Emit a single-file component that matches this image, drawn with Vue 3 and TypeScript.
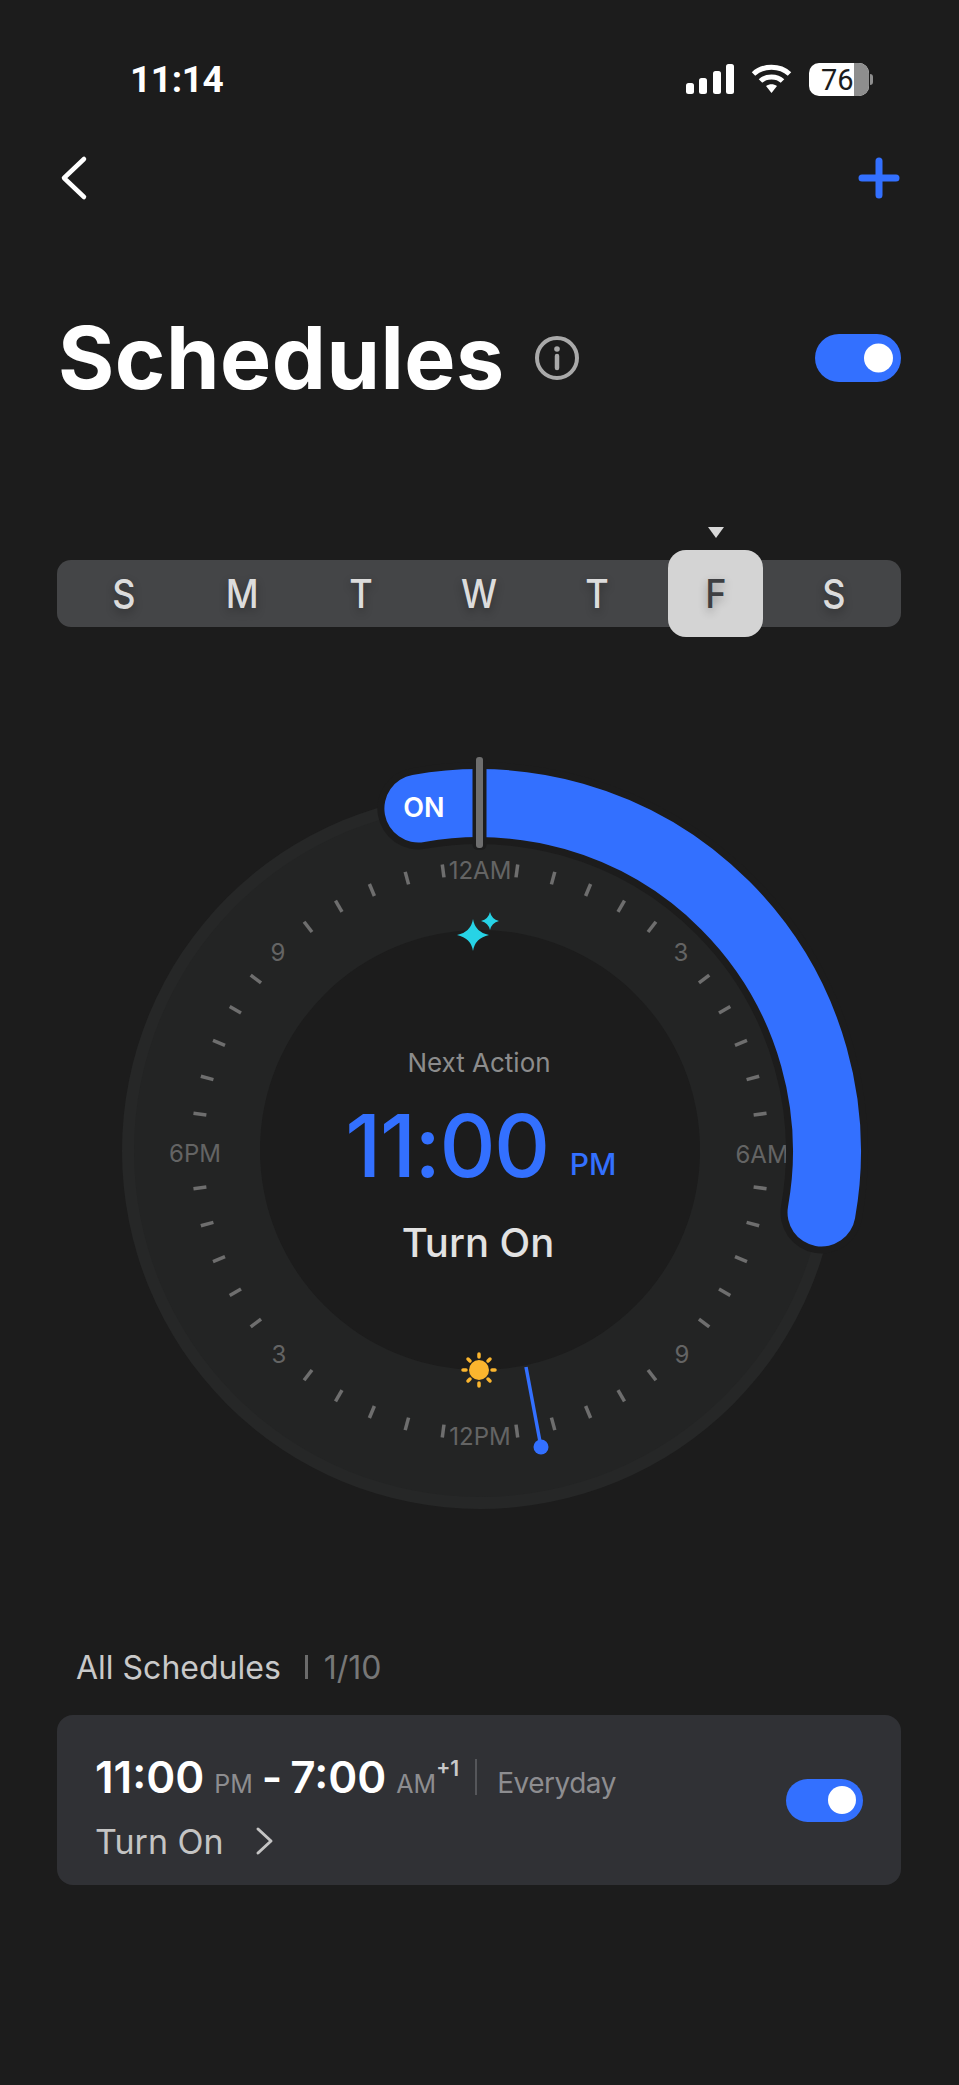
<script setup lang="ts">
import { computed } from "vue";

const days = [
    { label: "S" },
    { label: "M" },
    { label: "T" },
    { label: "W" },
    { label: "T" },
    { label: "F", active: true },
    { label: "S" },
];

const cx = 480;
const cy = 480;

// a point on the dial, degrees clockwise from 12 o'clock
function polar(deg: number, r: number) {
    const a = (deg * Math.PI) / 180;
    return { x: cx + r * Math.sin(a), y: cy - r * Math.cos(a) };
}

const ticks = computed(() => {
    const list = [];
    for (let i = 0; i < 48; i++) {
        if (i % 6 === 0) continue;
        const deg = i * 7.5;
        const a = polar(deg, 276);
        const b = polar(deg, 289);
        list.push({ x1: a.x, y1: a.y, x2: b.x, y2: b.y, key: i });
    }
    return list;
});

const hourLabels = [
    { text: "12AM", x: 480, y: 208 },
    { text: "3", x: 681, y: 290 },
    { text: "6AM", x: 762, y: 492 },
    { text: "9", x: 682, y: 692 },
    { text: "12PM", x: 480, y: 774 },
    { text: "3", x: 279, y: 692 },
    { text: "6PM", x: 195, y: 491 },
    { text: "9", x: 278, y: 290 },
];

const arcStart = polar(-10.2, 348);
const arcEnd = polar(100.2, 347);
const arcPath = `M ${arcStart.x} ${arcStart.y} A 348 348 0 0 1 ${arcEnd.x} ${arcEnd.y}`;
</script>

<template>
    <div class="screen">
        <div class="status">
            <span class="clock">11:14</span>
            <div class="status-icons">
                <svg width="48" height="30" viewBox="0 0 48 30" class="signal">
                    <rect x="0" y="19" width="8" height="11" rx="2.5" />
                    <rect x="13" y="14" width="8" height="16" rx="2.5" />
                    <rect x="27" y="7" width="8" height="23" rx="2.5" />
                    <rect x="40" y="0" width="8" height="30" rx="2.5" />
                </svg>
                <svg width="41" height="30" viewBox="0 0 41 30" class="wifi">
                    <path d="M2.500 10 C12 1 29 1 38.500 10" />
                    <path d="M9.500 17 C15 11.500 26 11.500 31.500 17" />
                    <path d="M15 22 L20.500 29 L26 22 C22.500 19.500 18.500 19.500 15 22 Z" class="wifi-dot" />
                </svg>
                <div class="battery">
                    <div class="battery-body">
                        <div class="battery-empty"></div>
                        <span class="battery-num">76</span>
                    </div>
                    <div class="battery-cap"></div>
                </div>
            </div>
        </div>

        <div class="nav">
            <svg width="30" height="46" viewBox="0 0 30 46" class="back">
                <path d="M26 4 L6 23 L26 42" />
            </svg>
            <svg width="42" height="42" viewBox="0 0 42 42" class="plus">
                <path d="M21 4 V38 M4 21 H38" />
            </svg>
        </div>

        <div class="title-row">
            <h1>Schedules</h1>
            <svg width="46" height="46" viewBox="0 0 46 46" class="info">
                <circle cx="23" cy="23" r="20" />
                <circle cx="23" cy="14" r="2.800" class="info-dot" />
                <path d="M23 21 V33" />
            </svg>
            <div class="toggle big"><i></i></div>
        </div>

        <div class="week-wrap">
            <div class="week">
                <div v-for="(day, index) of days" :key="index" class="day" :class="{ active: day.active }">
                    <span v-if="day.active" class="pointer"></span>
                    <span class="day-label">{{ day.label }}</span>
                </div>
            </div>
        </div>

        <div class="dial">
            <svg width="959" height="960" viewBox="0 0 959 960">
                <circle :cx="cx" :cy="cy" r="358" fill="#262727" />
                <circle :cx="cx" :cy="cy" r="346" fill="#232424" />
                <circle :cx="cx" :cy="cy - 1" r="220" fill="#1c1c1c" />
                <line
                    v-for="t of ticks"
                    :key="t.key"
                    :x1="t.x1"
                    :y1="t.y1"
                    :x2="t.x2"
                    :y2="t.y2"
                    stroke="#6e6e6e"
                    stroke-width="3.500"
                />
                <text
                    v-for="l of hourLabels"
                    :key="l.text + l.x"
                    :x="l.x"
                    :y="l.y"
                    text-anchor="middle"
                    class="hour"
                >{{ l.text }}</text>

                <path :d="arcPath" fill="none" stroke="#1c1c1c" stroke-width="82" stroke-linecap="round" />
                <path :d="arcPath" fill="none" stroke="#3370ff" stroke-width="68" stroke-linecap="round" />
                <text x="424" y="146" text-anchor="middle" class="on">ON</text>
                <rect x="472.500" y="84" width="14" height="95" rx="5" fill="#1c1c1c" />
                <rect x="476" y="86" width="7" height="91" rx="3" fill="#6e6e6e" />

                <path d="M473 248 Q475 261 489 264 Q475 267 473 280 Q471 267 457 264 Q471 261 473 248 Z" fill="#27d3e6" />
                <path d="M490 241 Q491.500 248 499 250 Q491.500 252 490 259 Q488.500 252 481 250 Q488.500 248 490 241 Z" fill="#27d3e6" />

                <circle cx="479" cy="699" r="10" fill="#fbb52e" />
                <g stroke="#fbb52e" stroke-width="3.500" stroke-linecap="round">
                    <path d="M479 683 V686 M479 712 V715 M463 699 H466 M492 699 H495 M468 688 L470 690 M488 708 L490 710 M468 710 L470 708 M488 690 L490 688" />
                </g>

                <line x1="526" y1="696" x2="541" y2="776" stroke="#3370ff" stroke-width="3.500" />
                <circle cx="541" cy="776" r="7.500" fill="#3370ff" />

                <text x="479" y="401" text-anchor="middle" class="next">Next Action</text>
                <text x="447" y="506" text-anchor="middle" class="big-time">11:00</text>
                <text x="593" y="504" text-anchor="middle" class="pm">PM</text>
                <text x="478" y="586" text-anchor="middle" class="action">Turn On</text>
            </svg>
        </div>

        <div class="list-head">
            <span class="list-title">All Schedules</span>
            <span class="list-sep"></span>
            <span class="list-count">1/10</span>
        </div>

        <div class="card">
            <div class="card-main">
                <div class="card-times">
                    <span class="t">11:00</span>
                    <span class="ap">PM</span>
                    <span class="t dash">-</span>
                    <span class="t">7:00</span>
                    <span class="ap">AM</span>
                    <sup>+1</sup>
                    <span class="card-sep"></span>
                    <span class="repeat">Everyday</span>
                </div>
                <div class="card-action">
                    <span>Turn On</span>
                    <svg width="20" height="30" viewBox="0 0 20 30" class="chev">
                        <path d="M3 3 L16 15 L3 27" />
                    </svg>
                </div>
            </div>
            <div class="toggle small"><i></i></div>
        </div>
    </div>
</template>

<style>
body {
    background: #1c1c1c;
}
</style>

<style scoped>
.screen {
    width: 959px;
    height: 2085px;
    overflow: hidden;
    background: #1c1c1c;
    color: #fff;
    font-family: Inter, "Liberation Sans", sans-serif;
}

.status {
    display: flex;
    justify-content: space-between;
    align-items: center;
    height: 40px;
    padding: 59px 86px 0 130px;
}

.clock {
    font-family: Roboto, sans-serif;
    font-weight: 700;
    font-size: 37px;
    letter-spacing: -0.4px;
}

.status-icons {
    display: flex;
    align-items: center;
    gap: 17px;
}

.signal rect {
    fill: #fff;
}

.wifi path {
    fill: none;
    stroke: #fff;
    stroke-width: 5;
}

.wifi .wifi-dot {
    fill: #fff;
    stroke: none;
}

.battery {
    display: flex;
    align-items: center;
    gap: 1px;
}

.battery-body {
    position: relative;
    width: 60px;
    height: 33px;
    border-radius: 10px;
    background: #fff;
    overflow: hidden;
    color: #1c1c1c;
}

.battery-num {
    position: absolute;
    left: 12px;
    top: 3px;
    font-family: Roboto, sans-serif;
    font-size: 29px;
    line-height: 28px;
}

.battery-empty {
    position: absolute;
    right: 0;
    top: 0;
    bottom: 0;
    width: 15px;
    background: #8e8e8e;
}

.battery-cap {
    width: 3px;
    height: 11px;
    border-radius: 0 3px 3px 0;
    background: #8e8e8e;
}

.nav {
    display: flex;
    justify-content: space-between;
    align-items: center;
    padding: 56px 59px 0 58px;
}

.back path {
    fill: none;
    stroke: #fff;
    stroke-width: 4.5;
    stroke-linecap: round;
    stroke-linejoin: round;
}

.plus path {
    fill: none;
    stroke: #3370ff;
    stroke-width: 7;
    stroke-linecap: round;
}

.title-row {
    display: flex;
    align-items: center;
    margin-top: 112px;
    padding: 0 58px;
}

h1 {
    margin: 0;
    font-size: 86px;
    line-height: 90px;
    font-weight: 700;
    letter-spacing: 0.5px;
}

.info {
    margin-left: 29px;
}

.info circle {
    fill: none;
    stroke: #a9a9a9;
    stroke-width: 4;
}

.info .info-dot {
    fill: #a9a9a9;
    stroke: none;
}

.info path {
    fill: none;
    stroke: #a9a9a9;
    stroke-width: 4.5;
    stroke-linecap: round;
}

.toggle {
    position: relative;
    background: #3370ff;
}

.toggle i {
    position: absolute;
    top: 50%;
    border-radius: 50%;
    background: #fff;
    transform: translateY(-50%);
}

.toggle.big {
    width: 86px;
    height: 48px;
    margin-left: auto;
    border-radius: 24px;
}

.toggle.big i {
    right: 8px;
    width: 29px;
    height: 29px;
}

.toggle.small {
    width: 77px;
    height: 43px;
    border-radius: 22px;
}

.toggle.small i {
    right: 7px;
    width: 28px;
    height: 28px;
}

.week-wrap {
    margin-top: 157px;
    padding: 0 58px 0 57px;
}

.week {
    display: grid;
    grid-template-columns: repeat(7, 1fr);
    height: 67px;
    border-radius: 14px;
    background: #444547;
    padding: 0 8px;
}

.day {
    position: relative;
    display: flex;
    align-items: center;
    justify-content: center;
    font-size: 40px;
    font-weight: 500;
    color: #dcdcdc;
    text-shadow: 0 4px 10px rgba(0, 0, 0, 0.3);
}

.day-label {
    display: block;
    transform: scaleX(0.9);
}

.day.active {
    margin: -10px 0;
    border-radius: 18px;
    background: #d4d4d4;
    color: #3e3f42;
    justify-self: center;
    width: 95px;
}

.pointer {
    position: absolute;
    top: -23px;
    left: 50%;
    margin-left: -8px;
    border-left: 8px solid transparent;
    border-right: 8px solid transparent;
    border-top: 11px solid #d8d8d8;
}

.dial {
    position: relative;
    height: 960px;
    margin-top: 44px;
}

.dial svg {
    display: block;
}

.hour {
    fill: #646464;
    font-size: 24px;
    font-family: Inter, sans-serif;
}

.on {
    fill: #fff;
    font-size: 27px;
    font-weight: 600;
    font-family: Inter, sans-serif;
}

.next {
    fill: #8c8c8c;
    font-size: 26px;
    font-family: Inter, sans-serif;
}

.big-time {
    fill: #3370ff;
    font-size: 87px;
    font-weight: 500;
    letter-spacing: -1.5px;
    font-family: Inter, sans-serif;
}

.pm {
    fill: #3370ff;
    font-size: 30px;
    font-weight: 500;
    font-family: Inter, sans-serif;
}

.action {
    fill: #e2e2e2;
    font-size: 40px;
    font-weight: 500;
    font-family: Inter, sans-serif;
}

.list-head {
    display: flex;
    align-items: center;
    margin-top: 16px;
    padding-left: 76px;
    height: 40px;
    font-size: 32px;
}

.list-title {
    color: #c9c9c9;
}

.list-sep {
    width: 3px;
    height: 24px;
    margin: 0 16px 0 24px;
    background: #6b6b6b;
}

.list-count {
    color: #777;
}

.card {
    display: flex;
    align-items: center;
    justify-content: space-between;
    margin: 28px 58px 0 57px;
    height: 170px;
    padding: 0 38px;
    border-radius: 16px;
    background: #303135;
}

.card-main {
    margin-top: 14px;
}

.card-times {
    display: flex;
    align-items: baseline;
    height: 52px;
    line-height: 52px;
}

.t {
    font-size: 44px;
    font-weight: 600;
    color: #fff;
}

.dash {
    margin: 0 8px 0 9px;
}

.ap {
    margin-left: 10px;
    font-size: 25px;
    color: #8d8d90;
}

sup {
    align-self: flex-start;
    margin-top: -8px;
    font-size: 21px;
    font-weight: 600;
    color: #c9c9c9;
}

.card-sep {
    align-self: center;
    width: 2px;
    height: 36px;
    margin: 0 20px 0 16px;
    background: #55565a;
}

.repeat {
    font-size: 28px;
    letter-spacing: -0.5px;
    color: #8d8d90;
}

.card-action {
    display: flex;
    align-items: center;
    gap: 31px;
    margin-top: 16px;
    height: 44px;
    font-size: 34px;
    color: #c4c4c4;
}

.chev path {
    fill: none;
    stroke: #c4c4c4;
    stroke-width: 3;
    stroke-linecap: round;
    stroke-linejoin: round;
}
</style>
